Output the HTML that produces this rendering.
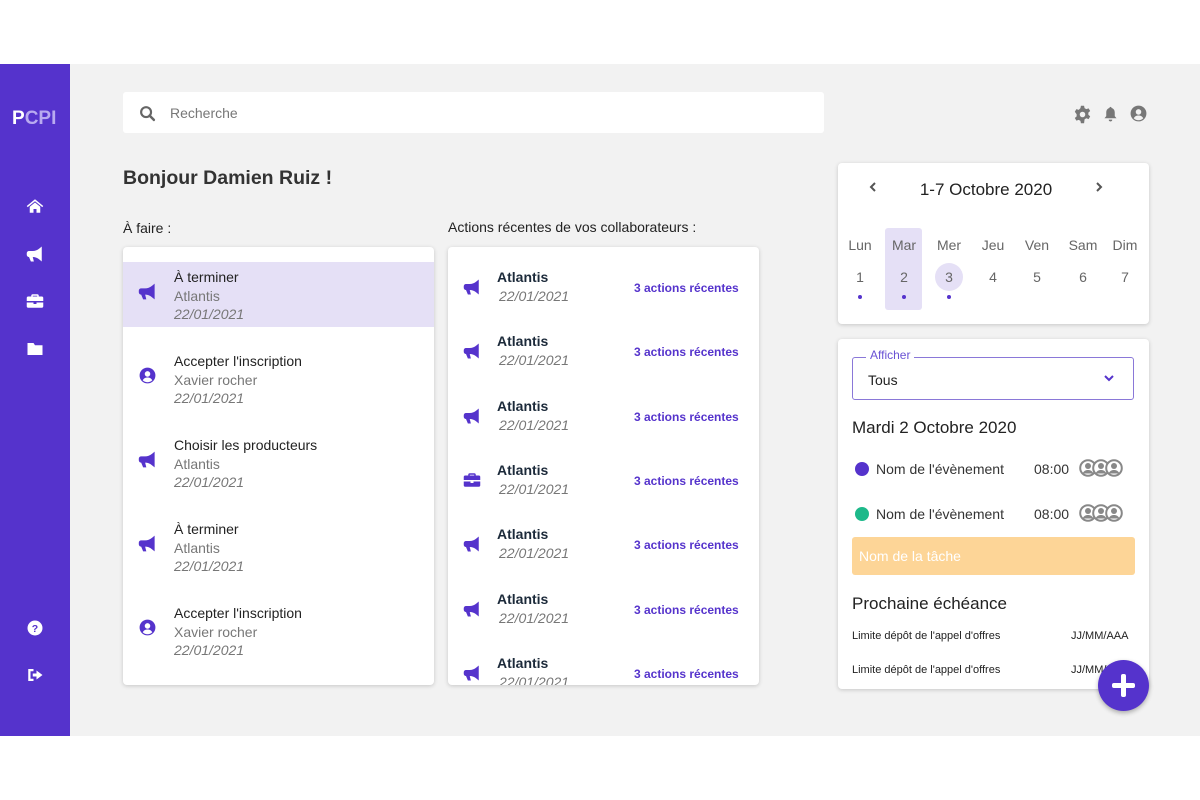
<!DOCTYPE html>
<html><head><meta charset="utf-8"><style>
*{box-sizing:border-box;margin:0;padding:0}
body{width:1200px;height:800px;background:#fff;font-family:"Liberation Sans",sans-serif;position:relative;overflow:hidden;color:#222}
.app{position:absolute;left:0;top:64px;width:1200px;height:672px;background:#f2f2f2}
.side{position:absolute;left:0;top:0;width:70px;height:672px;background:#5533cc}
.logo{position:absolute;left:12px;top:44px;font-weight:bold;font-size:19px;color:#fff}
.logo span{color:#b9aaf0}
.si{position:absolute;left:26px;width:18px;height:18px}
.abs{position:absolute}
.card{position:absolute;background:#fff;border-radius:4px;box-shadow:0 1px 4px rgba(0,0,0,.18);overflow:hidden}
.t{font-size:14px;color:#222}
.g{font-size:14px;color:#777}
.i{font-size:14px;color:#777;font-style:italic}
.link{font-size:12px;color:#5533cc;font-weight:bold}
</style></head><body>
<div class="app">
<div class="side">
<div class="logo">P<span>CPI</span></div>
<svg class="si" style="top:133px" viewBox="0 0 24 24"><path fill="#fff" d="M12 3 1 12l1.3 1.5L12 5.6l9.7 7.9L23 12zM5 13v8h5v-5h4v5h5v-8l-7-5.6z"/></svg>
<svg class="si" style="top:181px" viewBox="0 0 24 24"><path fill="#fff" d="M21 2v20l-3-2.5C15 17 12 16 9 16l1.5 6h-4L4 16a3 3 0 0 1-3-3v-2a3 3 0 0 1 3-3h5c3 0 6-1 9-3.5z"/></svg>
<svg class="si" style="top:228px" viewBox="0 0 24 24"><path fill="#fff" d="M9 3h6a2 2 0 0 1 2 2v1h4a2 2 0 0 1 2 2v4H1V8a2 2 0 0 1 2-2h4V5a2 2 0 0 1 2-2zm0 3h6V5H9zM1 14h9v2h4v-2h9v5a2 2 0 0 1-2 2H3a2 2 0 0 1-2-2z"/></svg>
<svg class="si" style="top:276px" viewBox="0 0 24 24"><path fill="#fff" d="M2 4h8l2 3h10v13H2z"/></svg>
<svg class="si" style="top:555px" viewBox="0 0 24 24"><circle cx="12" cy="12" r="10" fill="#fff"/><text x="12" y="17" font-size="14" font-weight="bold" text-anchor="middle" fill="#5533cc" font-family="Liberation Sans">?</text></svg>
<svg class="si" style="top:602px" viewBox="0 0 24 24"><path fill="#fff" d="M3 4h7v3H6v10h4v3H3zM14 6l8 6-8 6v-4H9v-4h5z"/></svg>
</div>
<div class="abs" style="left:123px;top:28px;width:701px;height:41px;background:#fff;border-radius:3px"></div>
<svg class="abs" style="left:139px;top:41px" width="17" height="17" viewBox="0 0 24 24"><circle cx="10" cy="10" r="7" fill="none" stroke="#666" stroke-width="3"/><path d="M15 15l6 6" stroke="#666" stroke-width="3.5" stroke-linecap="round"/></svg>
<div class="abs" style="left:170px;top:41px;font-size:14px;color:#777">Recherche</div>
<svg class="abs" style="left:1073px;top:41px" width="19" height="19" viewBox="0 0 24 24"><path fill="#777" d="M10 1h4l.6 3 2.2 1.2 2.9-1 2 3.4-2.3 2.1v2.6l2.3 2.1-2 3.4-2.9-1-2.2 1.3L14 23h-4l-.6-3-2.2-1.2-2.9 1-2-3.4 2.3-2.1v-2.6L2.3 8.6l2-3.4 2.9 1L9.4 4z"/><circle cx="12" cy="12" r="3.5" fill="#f2f2f2"/></svg>
<svg class="abs" style="left:1102px;top:41px" width="17" height="18" viewBox="0 0 24 24"><path fill="#777" d="M12 2c1 0 1.5.7 1.5 1.5 3 .8 4.5 3.3 4.5 6.5v5l2.5 3H3.5L6 15v-5c0-3.2 1.5-5.7 4.5-6.5C10.5 2.7 11 2 12 2zm-2.5 18h5a2.5 2.5 0 0 1-5 0z"/></svg>
<svg class="abs" style="left:1129px;top:40px" width="19" height="19" viewBox="0 0 24 24"><circle cx="12" cy="12" r="10" fill="#777"/><circle cx="12" cy="10" r="3.5" fill="#f2f2f2"/><path d="M6 18c1.5-3 4-3.5 6-3.5s4.5.5 6 3.5c-1.6 1.6-3.7 2.5-6 2.5s-4.4-.9-6-2.5z" fill="#f2f2f2"/></svg>

<div class="abs" style="left:123px;top:103px;font-size:19.5px;font-weight:bold;color:#333">Bonjour Damien Ruiz !</div>
<div class="abs" style="left:123px;top:156px;font-size:14px;color:#222">À faire :</div>
<div class="abs" style="left:448px;top:155px;font-size:14px;color:#222">Actions récentes de vos collaborateurs :</div>

<div class="card" style="left:123px;top:183px;width:311px;height:438px">
<div class="abs" style="left:0;top:15px;width:311px;height:65px;background:#e5e0f6"></div>
<div id="todo"></div>
</div>
<div class="card" style="left:448px;top:183px;width:311px;height:438px"><div id="rec"></div></div>

<div class="card" style="left:838px;top:99px;width:311px;height:161px">
<svg class="abs" style="left:30px;top:18px" width="10" height="12" viewBox="0 0 10 12"><path d="M7 2 3 6l4 4" stroke="#555" stroke-width="2" fill="none"/></svg>
<svg class="abs" style="left:256px;top:18px" width="10" height="12" viewBox="0 0 10 12"><path d="M3 2l4 4-4 4" stroke="#555" stroke-width="2" fill="none"/></svg>
<div class="abs" style="left:0;top:17px;width:296px;text-align:center;font-size:17px;color:#222">1-7 Octobre 2020</div>
<div class="abs" style="left:47px;top:65px;width:37px;height:82px;background:#e5e0f6;border-radius:3px"></div>
<div class="abs" style="left:97px;top:100px;width:28px;height:28px;background:#e5e0f6;border-radius:50%"></div>
<div id="cal"></div>
</div>

<div class="card" style="left:838px;top:275px;width:311px;height:350px">
<div class="abs" style="left:14px;top:18px;width:282px;height:43px;border:1px solid #8a78d8;border-radius:3px"></div>
<div class="abs" style="left:28px;top:9px;padding:0 4px;background:#fff;font-size:12px;color:#6a52d4">Afficher</div>
<div class="abs" style="left:30px;top:33px;font-size:14px;color:#222">Tous</div>
<svg class="abs" style="left:265px;top:34px" width="12" height="10" viewBox="0 0 12 10"><path d="M2 3l4 4 4-4" stroke="#5533cc" stroke-width="2" fill="none"/></svg>
<div class="abs" style="left:14px;top:79px;font-size:17px;color:#222">Mardi 2 Octobre 2020</div>
<div class="abs" style="left:17px;top:123px;width:14px;height:14px;border-radius:50%;background:#5533cc"></div>
<div class="abs" style="left:38px;top:122px;font-size:14px;color:#333">Nom de l'évènement</div>
<div class="abs" style="left:196px;top:122px;font-size:14px;color:#333">08:00</div>
<div class="abs" style="left:17px;top:168px;width:14px;height:14px;border-radius:50%;background:#1db98a"></div>
<div class="abs" style="left:38px;top:167px;font-size:14px;color:#333">Nom de l'évènement</div>
<div class="abs" style="left:196px;top:167px;font-size:14px;color:#333">08:00</div>
<div id="av"></div>
<div class="abs" style="left:14px;top:198px;width:283px;height:38px;background:#fdd597;border-radius:3px;color:#fff;font-size:14px;padding:11px 7px">Nom de la tâche</div>
<div class="abs" style="left:14px;top:255px;font-size:17px;color:#222">Prochaine échéance</div>
<div class="abs" style="left:14px;top:291px;font-size:11px;color:#222">Limite dépôt de l'appel d'offres</div>
<div class="abs" style="left:233px;top:291px;font-size:11px;color:#222">JJ/MM/AAA</div>
<div class="abs" style="left:14px;top:325px;font-size:11px;color:#222">Limite dépôt de l'appel d'offres</div>
<div class="abs" style="left:233px;top:325px;font-size:11px;color:#222">JJ/MM/AAA</div>
</div>
<div class="abs" style="left:1098px;top:596px;width:51px;height:51px;border-radius:50%;background:#5533cc;box-shadow:0 2px 5px rgba(0,0,0,.3)"><div class="abs" style="left:14px;top:23px;width:23px;height:5px;background:#fff;border-radius:2px"></div><div class="abs" style="left:23px;top:14px;width:5px;height:23px;background:#fff;border-radius:2px"></div></div>
</div>
<script>
var mega='<path fill="#5533cc" d="M21 2v20l-3-2.5C15 17 12 16 9 16l1.5 6h-4L4 16a3 3 0 0 1-3-3v-2a3 3 0 0 1 3-3h5c3 0 6-1 9-3.5z"/>';
var user='<circle cx="12" cy="12" r="10" fill="#5533cc"/><circle cx="12" cy="10" r="3.5" fill="#fff"/><path d="M6 18c1.5-3 4-3.5 6-3.5s4.5.5 6 3.5c-1.6 1.6-3.7 2.5-6 2.5s-4.4-.9-6-2.5z" fill="#fff"/>';
var brief='<path fill="#5533cc" d="M9 3h6a2 2 0 0 1 2 2v1h4a2 2 0 0 1 2 2v4H1V8a2 2 0 0 1 2-2h4V5a2 2 0 0 1 2-2zm0 3h6V5H9zM1 14h9v2h4v-2h9v5a2 2 0 0 1-2 2H3a2 2 0 0 1-2-2z"/>';
var todo=[["À terminer","Atlantis",mega],["Accepter l'inscription","Xavier rocher",user],["Choisir les producteurs","Atlantis",mega],["À terminer","Atlantis",mega],["Accepter l'inscription","Xavier rocher",user]];
var h='';todo.forEach(function(r,k){var y=22+k*84;
h+='<svg class="abs" style="left:15px;top:'+(y+13)+'px" width="19" height="19" viewBox="0 0 24 24">'+r[2]+'</svg>';
h+='<div class="abs t" style="left:51px;top:'+y+'px">'+r[0]+'</div><div class="abs g" style="left:51px;top:'+(y+19)+'px">'+r[1]+'</div><div class="abs i" style="left:51px;top:'+(y+37)+'px">22/01/2021</div>';});
document.getElementById('todo').innerHTML=h;
h='';for(var k=0;k<7;k++){var y=22+k*64.3;
h+='<svg class="abs" style="left:15px;top:'+(y+9)+'px" width="18" height="18" viewBox="0 0 24 24">'+(k==3?brief:mega)+'</svg>';
h+='<div class="abs t" style="left:49px;top:'+y+'px;font-weight:bold;color:#1c2a3a">Atlantis</div><div class="abs i" style="left:51px;top:'+(y+19)+'px">22/01/2021</div><div class="abs link" style="left:186px;top:'+(y+12)+'px">3 actions récentes</div>';}
document.getElementById('rec').innerHTML=h;
var d=["Lun","Mar","Mer","Jeu","Ven","Sam","Dim"],xs=[22,66,111,155,199,245,287];h='';
d.forEach(function(n,k){h+='<div class="abs" style="left:'+(xs[k]-20)+'px;top:74px;width:40px;text-align:center;font-size:14px;color:#666">'+n+'</div><div class="abs" style="left:'+(xs[k]-20)+'px;top:106px;width:40px;text-align:center;font-size:14px;color:#666">'+(k+1)+'</div>';
if(k<3)h+='<div class="abs" style="left:'+(xs[k]-2)+'px;top:132px;width:4px;height:4px;border-radius:50%;background:#5533cc"></div>';});
document.getElementById('cal').innerHTML=h;
var a='';[120,165].forEach(function(t){a+='<svg class="abs" style="left:241px;top:'+t+'px" width="48" height="18" viewBox="0 0 48 18">';
[9,22,35].forEach(function(c){a+='<circle cx="'+c+'" cy="9" r="7.8" fill="#fff" stroke="#888" stroke-width="2"/><circle cx="'+c+'" cy="7" r="3" fill="#888"/><path d="M'+(c-5.5)+' 14.5c1.5-3 3.5-3.5 5.5-3.5s4 .5 5.5 3.5" fill="#888"/>';});
a+='</svg>';});document.getElementById('av').innerHTML=a;
</script>
</body></html>
